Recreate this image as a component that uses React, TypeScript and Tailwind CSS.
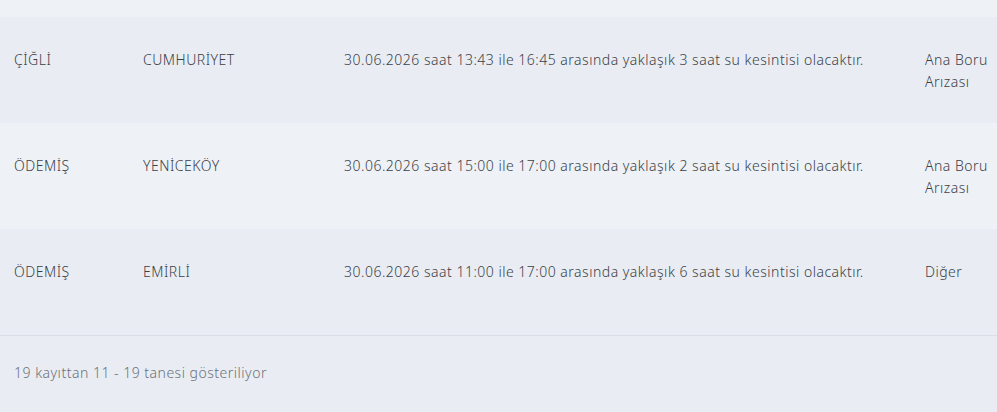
import React from 'react';

type Row = {
  ilce: string;
  mahalle: string;
  aciklama: string;
  neden: string;
};

const rows: Row[] = [
  {
    ilce: 'ÇİĞLİ',
    mahalle: 'CUMHURİYET',
    aciklama: '30.06.2026 saat 13:43 ile 16:45 arasında yaklaşık 3 saat su kesintisi olacaktır.',
    neden: 'Ana Boru Arızası',
  },
  {
    ilce: 'ÖDEMİŞ',
    mahalle: 'YENİCEKÖY',
    aciklama: '30.06.2026 saat 15:00 ile 17:00 arasında yaklaşık 2 saat su kesintisi olacaktır.',
    neden: 'Ana Boru Arızası',
  },
  {
    ilce: 'ÖDEMİŞ',
    mahalle: 'EMİRLİ',
    aciklama: '30.06.2026 saat 11:00 ile 17:00 arasında yaklaşık 6 saat su kesintisi olacaktır.',
    neden: 'Diğer',
  },
];

const App: React.FC = () => {
  return (
    <div className="w-[997px] h-[412px] overflow-hidden bg-[#eef1f6] font-['Noto_Sans',sans-serif] font-light tracking-[0.5px] text-[14px] text-[#3b3f47]">
      {/* previous row edge */}
      <div className="h-[17px] bg-[#eef1f6]" />

      {/* Rows */}
      {rows.map((row, i) => (
        <div
          key={i}
          className={`flex h-[106px] pt-[32px] leading-[22px] ${
            i % 2 === 0 ? 'bg-[#e9edf3]' : 'bg-[#eef1f6]'
          }`}
        >
          <div className="w-[143px] pl-[14px]">{row.ilce}</div>
          <div className="w-[201px]">{row.mahalle}</div>
          <div className="w-[581px]">{row.aciklama}</div>
          <div className="w-[72px]">{row.neden}</div>
        </div>
      ))}

      {/* Footer */}
      <div className="border-t border-[#d9dee6] bg-[#e9edf3] h-[78px] pl-[14px] pt-[26px] text-[#6b717b] leading-[22px]">
        19 kayıttan 11 - 19 tanesi gösteriliyor
      </div>
    </div>
  );
};

export default App;
